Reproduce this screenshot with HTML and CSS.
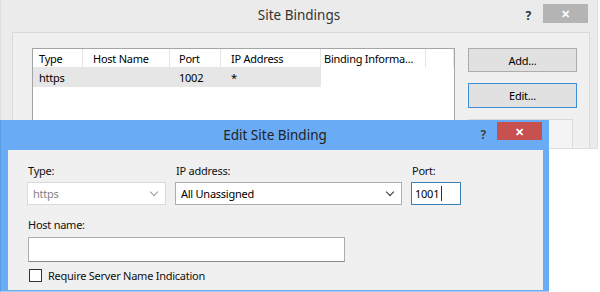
FILE: index.html
```html
<!DOCTYPE html>
<html>
	<head>
		<title>Site Bindings</title>
		<link rel="stylesheet" href="styles.css">
	</head>
	<body>
		<div class="window back">
			<div class="titlebar">
				<span class="title">Site Bindings</span>
				<div class="controls">
					<span class="help">?</span>
					<span class="close">&#x2715;</span>
				</div>
			</div>
			<div class="client">
				<div class="listview">
					<div class="lv-row lv-head">
						<div class="c1">Type</div>
						<div class="c2">Host Name</div>
						<div class="c3">Port</div>
						<div class="c4">IP Address</div>
						<div class="c5">Binding Informa...</div>
						<div class="c6"></div>
					</div>
					<div class="lv-row lv-selected">
						<div class="c1">https</div>
						<div class="c2"></div>
						<div class="c3">1002</div>
						<div class="c4">*</div>
					</div>
				</div>
				<div class="buttons">
					<div class="button">Add...</div>
					<div class="button default">Edit...</div>
					<div class="button ghost"></div>
				</div>
			</div>
		</div>

		<div class="window front">
			<div class="titlebar">
				<span class="title">Edit Site Binding</span>
				<div class="controls">
					<span class="help">?</span>
					<span class="close">&#x2715;</span>
				</div>
			</div>
			<div class="client">
				<div class="fields">
					<div class="field f-type">
						<label>Type:</label>
						<div class="select disabled">https<span class="chevron"></span></div>
					</div>
					<div class="field f-ip">
						<label>IP address:</label>
						<div class="select">All Unassigned<span class="chevron"></span></div>
					</div>
					<div class="field f-port">
						<label>Port:</label>
						<div class="textbox focused">1001<span class="caret"></span></div>
					</div>
				</div>
				<div class="field f-host">
					<label>Host name:</label>
					<div class="textbox"></div>
				</div>
				<div class="check">
					<span class="box"></span>
					<span>Require Server Name Indication</span>
				</div>
			</div>
		</div>
	</body>
</html>
```

FILE: styles.css
```css
body {
	margin: 0;
	background-color: #fff;
	font-family: "Noto Sans", sans-serif;
	font-size: 11px;
	letter-spacing: -0.25px;
	color: #000;
	position: relative;
	width: 600px;
	height: 292px;
	overflow: hidden;
}
.window {
	box-sizing: border-box;
}
.titlebar {
	display: grid;
	grid-template-columns: 1fr;
	align-items: center;
}
.titlebar > * {
	grid-area: 1 / 1;
}
.title {
	justify-self: center;
	font-size: 13.5px;
	letter-spacing: 0;
	color: #333;
}
.controls {
	justify-self: end;
	align-self: start;
	display: flex;
	align-items: flex-start;
}
.help {
	font-weight: bold;
	font-size: 12px;
	color: #333;
}
.close {
	display: flex;
	align-items: center;
	justify-content: center;
	width: 45px;
	color: #fff;
	font-size: 11px;
	font-weight: bold;
}

/* back window */
.back {
	width: 598px;
	height: 149px;
	background-color: #ebebeb;
	border: 1px solid #dedede;
	border-top: 0;
}
.back .titlebar {
	height: 32px;
}
.back .title {
	padding-bottom: 2px;
}
.back .help {
	margin-top: 7px;
	margin-right: 12px;
}
.back .close {
	margin-top: 4px;
	margin-right: 9px;
	height: 19px;
	background-color: #b4b4b4;
}
.back .client {
	margin-left: 11px;
	width: 578px;
	height: 116px;
	box-sizing: border-box;
	background-color: #f0f0f0;
	border: 1px solid #dadada;
	border-bottom: 0;
	display: flex;
	padding: 15px 0 0 19px;
}
.listview {
	width: 423px;
	height: 110px;
	box-sizing: border-box;
	background-color: #fff;
	border: 1px solid #a5a5a5;
}
.lv-row {
	display: flex;
	height: 19px;
	align-items: center;
}
.lv-head {
	height: 18px;
}
.lv-row div {
	box-sizing: border-box;
	height: 100%;
	display: flex;
	align-items: center;
	border-right: 1px solid #e5e5e5;
}
.lv-selected {
	width: 288px;
	height: 20px;
	background-color: #e6e6e6;
}
.lv-selected div {
	border-right: 0;
}
.c1 { width: 50px; padding-left: 6px; }
.c2 { width: 87px; padding-left: 10px; }
.c3 { width: 51px; padding-left: 9px; }
.c4 { width: 100px; padding-left: 10px; }
.c5 { width: 105px; padding-left: 3px; }
.c6 { width: 28px; }
.buttons {
	margin-left: 13px;
	display: flex;
	flex-direction: column;
	gap: 11px;
}
.button {
	width: 109px;
	height: 25px;
	box-sizing: border-box;
	background-color: #e1e1e1;
	border: 1px solid #adadad;
	display: flex;
	align-items: center;
	justify-content: center;
}
.button.default {
	border-color: #3c8fd6;
}
.button.ghost {
	width: 105px;
	height: 30px;
	background-color: #f4f4f4;
	border-color: #dadada;
	border-bottom: 0;
}

/* front window */
.front {
	position: absolute;
	left: 0;
	top: 120px;
	width: 549px;
	height: 172px;
	background-color: #6aabf5;
	border-left: 1px solid #5a9ae0;
	border-bottom: 1px solid #a9cdf3;
}
.front .titlebar {
	height: 30px;
}
.front .title {
	color: #222;
}
.front .help {
	margin-top: 6px;
	margin-right: 11px;
	color: #444;
}
.front .close {
	margin-top: 2px;
	margin-right: 7px;
	height: 18px;
	background-color: #c75050;
}
.front .client {
	margin-left: 7px;
	width: 535px;
	height: 140px;
	box-sizing: border-box;
	background-color: #f0f0f0;
	padding: 13px 0 0 19px;
}
.fields {
	display: flex;
	gap: 9px;
}
.field label {
	display: block;
	height: 16px;
	line-height: 16px;
	margin-left: 1px;
	margin-bottom: 3px;
	color: #111;
}
.select, .textbox {
	box-sizing: border-box;
	height: 23px;
	background-color: #fff;
	border: 1px solid #adadad;
	display: flex;
	align-items: center;
	padding-left: 5px;
	position: relative;
}
.select .chevron {
	position: absolute;
	right: 8px;
	top: 6px;
	width: 5px;
	height: 5px;
	border-right: 1.5px solid #333;
	border-bottom: 1.5px solid #333;
	transform: rotate(45deg);
}
.select.disabled {
	border-color: #d9d9d9;
	color: #838383;
}
.select.disabled .chevron {
	border-color: #9a9a9a;
}
.f-type .select { width: 139px; }
.f-ip .select { width: 227px; }
.f-port .textbox { width: 50px; }
.textbox.focused {
	border-color: #3c7fb1;
	padding-left: 3px;
}
.caret {
	width: 1px;
	height: 15px;
	background-color: #333;
	margin-left: 2px;
}
.f-host {
	margin-top: 12px;
}
.f-host label {
	margin-bottom: 4px;
}
.f-host .textbox {
	width: 317px;
	height: 25px;
	margin-left: 1px;
	border-bottom-color: #8a8a8a;
}
.check {
	display: flex;
	align-items: center;
	gap: 6px;
	margin-top: 6px;
	margin-left: 2px;
	color: #111;
}
.check .box {
	width: 13px;
	height: 13px;
	box-sizing: border-box;
	background-color: #fff;
	border: 1px solid #333;
}
```
